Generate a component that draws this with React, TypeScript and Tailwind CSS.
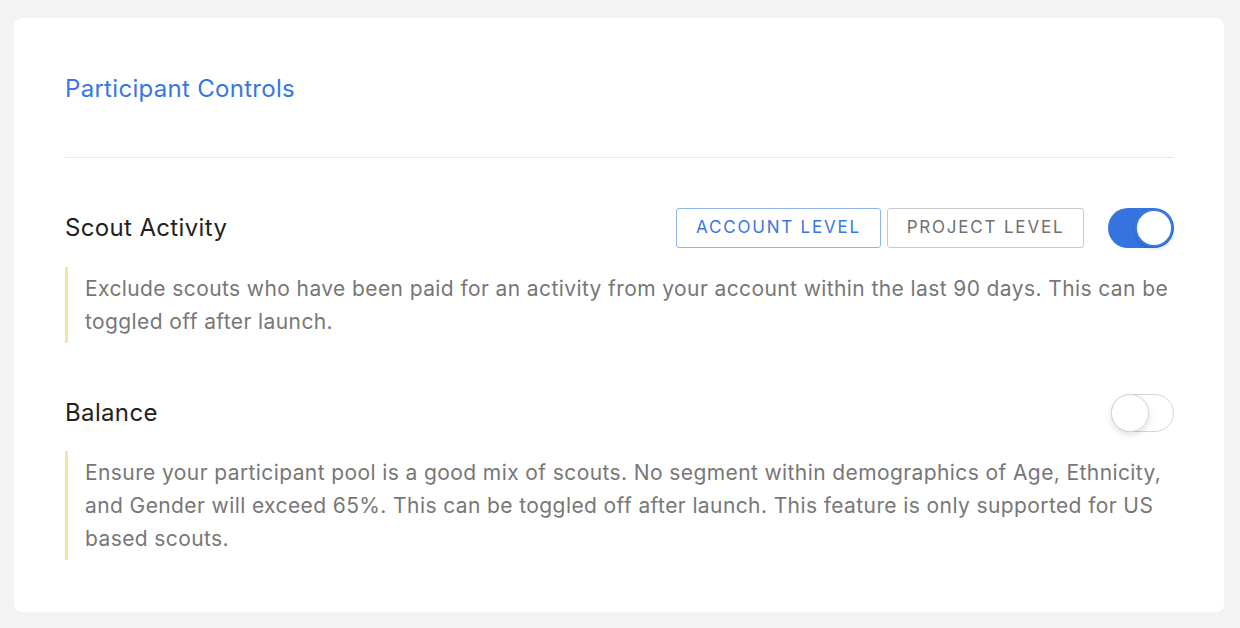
export default function App() {
  return (
    <div
      className="min-h-screen bg-[#f3f3f3] pt-[18px] pr-[16px] pl-[14px]"
      style={{ fontFamily: 'Inter, "Noto Sans", sans-serif' }}
    >
      <div className="rounded-[8px] bg-white pt-[55px] pr-[50px] pb-[52px] pl-[51px]">
        <h1 className="text-[24px] leading-[32px] tracking-[0.3px] text-[#3777e0]">Participant Controls</h1>
        <div className="mt-[52px] h-px bg-[#e8e8e8]" />

        {/* Scout Activity */}
        <div className="mt-[50px] flex h-[40px] items-center">
          <h2 className="flex-1 text-[24px] tracking-[0.35px] text-[#222]">Scout Activity</h2>
          <div className="flex gap-[6px]">
            <button className="h-[40px] w-[205px] rounded-[3px] border border-[#92b3ee] text-[17px] tracking-[1.8px] text-[#3777e0]">
              ACCOUNT LEVEL
            </button>
            <button className="h-[40px] w-[197px] rounded-[3px] border border-[#c9c9c9] text-[17px] tracking-[1.8px] text-[#707070]">
              PROJECT LEVEL
            </button>
          </div>
          <div className="ml-[24px] flex h-[40px] w-[66px] items-center justify-end rounded-full bg-[#3574e0] p-[1px]">
            <div className="h-[38px] w-[38px] rounded-full border-2 border-[#3a7ae6] bg-white shadow-[0_2px_4px_rgba(0,0,0,0.15)]" />
          </div>
        </div>
        <p className="mt-[19px] border-l-[3px] border-[#f6e3a6] py-[5px] pl-[17px] text-[21px] leading-[33px] tracking-[0.4px] text-[#777]">
          Exclude scouts who have been paid for an activity from your account within the last 90 days. This can be
          toggled off after launch.
        </p>

        {/* Balance */}
        <div className="mt-[50px] flex h-[40px] items-center">
          <h2 className="flex-1 text-[24px] tracking-[0.35px] text-[#222]">Balance</h2>
          <div className="flex h-[38px] w-[63px] items-center rounded-full border border-[#d6d6d6] bg-white">
            <div className="-ml-px h-[38px] w-[38px] rounded-full border border-[#d6d6d6] bg-white shadow-[0_3px_6px_rgba(0,0,0,0.12)]" />
          </div>
        </div>
        <p className="mt-[18px] border-l-[3px] border-[#f6e3a6] py-[5px] pl-[17px] text-[21px] leading-[33px] tracking-[0.4px] text-[#777]">
          Ensure your participant pool is a good mix of scouts. No segment within demographics of Age, Ethnicity, and
          Gender will exceed 65%. This can be toggled off after launch. This feature is only supported for US based
          scouts.
        </p>
      </div>
    </div>
  );
}
